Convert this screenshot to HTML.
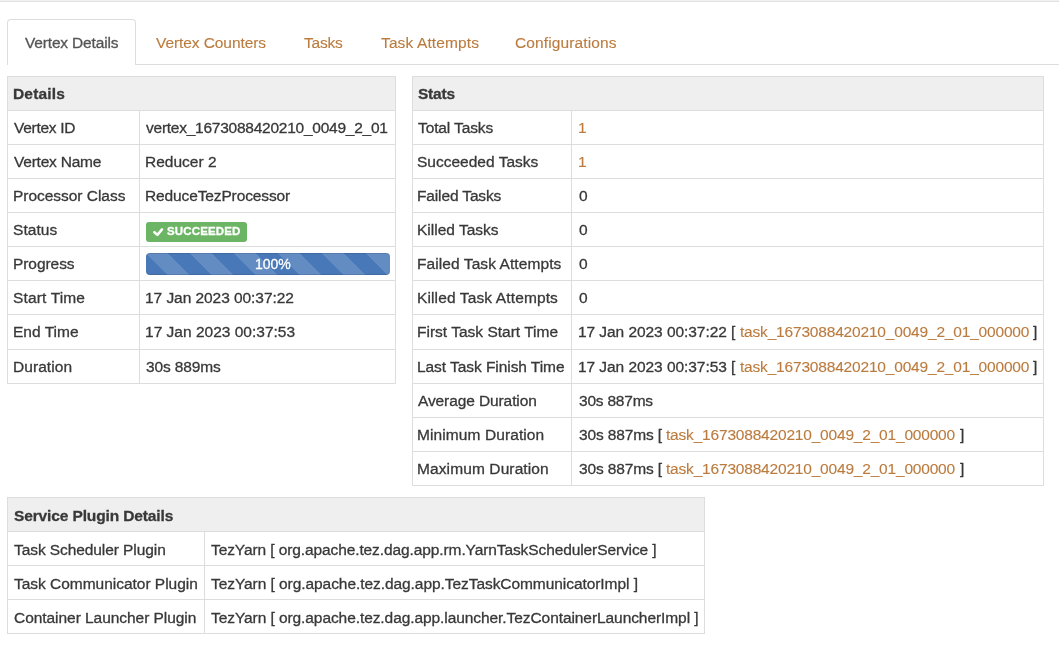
<!DOCTYPE html>
<html><head><meta charset="utf-8"><title>Vertex Details</title>
<style>
html,body{margin:0;padding:0;background:#fff;}
body{width:1059px;height:646px;overflow:hidden;position:relative;font-family:"Liberation Sans",sans-serif;}
.t{position:absolute;white-space:nowrap;line-height:20px;will-change:transform;-webkit-text-stroke:0.3px currentColor;}
.b{position:absolute;}
.a{color:#bb7b3e;-webkit-text-stroke:0.12px currentColor;}
.lk{-webkit-text-stroke:0.12px currentColor;}
</style></head><body>

<div class="b" style="left:0px;top:0px;width:1059px;height:1px;background:#f1f1f1"></div>
<div class="b" style="left:0px;top:1px;width:1059px;height:1px;background:#e2e2e2"></div>
<div class="b" style="left:7px;top:19px;width:129px;height:46px;box-sizing:border-box;border:1px solid #dddddd;border-bottom:none;border-radius:4px 4px 0 0;background:#fff"></div>
<div class="b" style="left:136px;top:64px;width:923px;height:1px;background:#dddddd"></div>
<div id="t0" class="t" style="left:24.72px;top:32.63px;font-size:15.5px;letter-spacing:-0.166px;color:#555555;">Vertex Details</div>
<div id="t1" class="t lk" style="left:156.48px;top:32.63px;font-size:15.5px;letter-spacing:-0.077px;color:#bb7b3e;">Vertex Counters</div>
<div id="t2" class="t lk" style="left:304.10px;top:32.63px;font-size:15.5px;letter-spacing:-0.225px;color:#bb7b3e;">Tasks</div>
<div id="t3" class="t lk" style="left:380.67px;top:32.63px;font-size:15.5px;letter-spacing:0.127px;color:#bb7b3e;">Task Attempts</div>
<div id="t4" class="t lk" style="left:514.82px;top:32.63px;font-size:15.5px;letter-spacing:0.118px;color:#bb7b3e;">Configurations</div>
<div class="b" style="left:7px;top:76px;width:389px;height:35px;background:#efefef"></div>
<div class="b" style="left:7px;top:76px;width:389px;height:1px;background:#dddddd"></div>
<div class="b" style="left:7px;top:383px;width:389px;height:1px;background:#dddddd"></div>
<div class="b" style="left:7px;top:76px;width:1px;height:308px;background:#dddddd"></div>
<div class="b" style="left:395px;top:76px;width:1px;height:308px;background:#dddddd"></div>
<div class="b" style="left:7px;top:110px;width:389px;height:1px;background:#dddddd"></div>
<div class="b" style="left:7px;top:144px;width:389px;height:1px;background:#dddddd"></div>
<div class="b" style="left:7px;top:178px;width:389px;height:1px;background:#dddddd"></div>
<div class="b" style="left:7px;top:212px;width:389px;height:1px;background:#dddddd"></div>
<div class="b" style="left:7px;top:246px;width:389px;height:1px;background:#dddddd"></div>
<div class="b" style="left:7px;top:280px;width:389px;height:1px;background:#dddddd"></div>
<div class="b" style="left:7px;top:314px;width:389px;height:1px;background:#dddddd"></div>
<div class="b" style="left:7px;top:349px;width:389px;height:1px;background:#dddddd"></div>
<div class="b" style="left:139px;top:110px;width:1px;height:274px;background:#dddddd"></div>
<div id="t5" class="t" style="left:12.82px;top:84.33px;font-size:15.5px;font-weight:bold;letter-spacing:0.165px;color:#383838;">Details</div>
<div id="t6" class="t" style="left:13.72px;top:118.33px;font-size:15.5px;letter-spacing:-0.281px;color:#383838;">Vertex ID</div>
<div id="t7" class="t" style="left:145.91px;top:118.33px;font-size:15.5px;letter-spacing:-0.245px;color:#383838;">vertex_1673088420210_0049_2_01</div>
<div id="t8" class="t" style="left:13.72px;top:152.33px;font-size:15.5px;letter-spacing:-0.225px;color:#383838;">Vertex Name</div>
<div id="t9" class="t" style="left:145.01px;top:152.33px;font-size:15.5px;letter-spacing:0.011px;color:#383838;">Reducer 2</div>
<div id="t10" class="t" style="left:12.82px;top:186.33px;font-size:15.5px;letter-spacing:-0.032px;color:#383838;">Processor Class</div>
<div id="t11" class="t" style="left:145.01px;top:186.33px;font-size:15.5px;letter-spacing:-0.127px;color:#383838;">ReduceTezProcessor</div>
<div id="t12" class="t" style="left:12.82px;top:220.33px;font-size:15.5px;letter-spacing:0.054px;color:#383838;">Status</div>
<div id="t13" class="t" style="left:12.82px;top:254.33px;font-size:15.5px;letter-spacing:-0.064px;color:#383838;">Progress</div>
<div id="t14" class="t" style="left:12.82px;top:288.33px;font-size:15.5px;letter-spacing:0.150px;color:#383838;">Start Time</div>
<div id="t15" class="t" style="left:145.01px;top:288.33px;font-size:15.5px;letter-spacing:-0.057px;color:#383838;">17 Jan 2023 00:37:22</div>
<div id="t16" class="t" style="left:12.82px;top:322.33px;font-size:15.5px;letter-spacing:0.013px;color:#383838;">End Time</div>
<div id="t17" class="t" style="left:145.01px;top:322.33px;font-size:15.5px;letter-spacing:0.005px;color:#383838;">17 Jan 2023 00:37:53</div>
<div id="t18" class="t" style="left:12.82px;top:357.33px;font-size:15.5px;letter-spacing:0.064px;color:#383838;">Duration</div>
<div id="t19" class="t" style="left:145.91px;top:357.33px;font-size:15.5px;letter-spacing:-0.135px;color:#383838;">30s 889ms</div>
<div class="b" style="left:146px;top:222px;width:101px;height:20px;background:#6cb564;border-radius:3px"></div>
<svg class="b" style="left:146px;top:222px" width="101" height="20" viewBox="0 0 101 20"><path d="M8.4 10.2 L11.4 12.9 L16.0 7.4" fill="none" stroke="#fff" stroke-width="2.5" stroke-linecap="round" stroke-linejoin="round"/></svg>
<div class="t" style="left:166.5px;top:220.72px;font-size:11.5px;font-weight:bold;letter-spacing:0.15px;color:#fff">SUCCEEDED</div>
<div class="b" style="left:146px;top:253px;width:244px;height:22px;border-radius:4px;overflow:hidden;background-color:#4878b7;background-image:linear-gradient(45deg,rgba(255,255,255,.15) 25%,transparent 25%,transparent 50%,rgba(255,255,255,.15) 50%,rgba(255,255,255,.15) 75%,transparent 75%,transparent);background-size:44px 44px;box-shadow:inset 0 1px 0 rgba(0,0,0,.12),inset 0 -1px 0 rgba(0,0,0,.12)"></div>
<div class="t" style="left:255.3px;top:253.85px;font-size:14px;color:#fff">100%</div>
<div class="b" style="left:412px;top:76px;width:632px;height:35px;background:#efefef"></div>
<div class="b" style="left:412px;top:76px;width:632px;height:1px;background:#dddddd"></div>
<div class="b" style="left:412px;top:485px;width:632px;height:1px;background:#dddddd"></div>
<div class="b" style="left:412px;top:76px;width:1px;height:410px;background:#dddddd"></div>
<div class="b" style="left:1043px;top:76px;width:1px;height:410px;background:#dddddd"></div>
<div class="b" style="left:412px;top:110px;width:632px;height:1px;background:#dddddd"></div>
<div class="b" style="left:412px;top:144px;width:632px;height:1px;background:#dddddd"></div>
<div class="b" style="left:412px;top:178px;width:632px;height:1px;background:#dddddd"></div>
<div class="b" style="left:412px;top:212px;width:632px;height:1px;background:#dddddd"></div>
<div class="b" style="left:412px;top:246px;width:632px;height:1px;background:#dddddd"></div>
<div class="b" style="left:412px;top:280px;width:632px;height:1px;background:#dddddd"></div>
<div class="b" style="left:412px;top:314px;width:632px;height:1px;background:#dddddd"></div>
<div class="b" style="left:412px;top:349px;width:632px;height:1px;background:#dddddd"></div>
<div class="b" style="left:412px;top:383px;width:632px;height:1px;background:#dddddd"></div>
<div class="b" style="left:412px;top:417px;width:632px;height:1px;background:#dddddd"></div>
<div class="b" style="left:412px;top:451px;width:632px;height:1px;background:#dddddd"></div>
<div class="b" style="left:571px;top:110px;width:1px;height:376px;background:#dddddd"></div>
<div id="t20" class="t" style="left:418.34px;top:84.33px;font-size:15.5px;font-weight:bold;letter-spacing:-0.225px;color:#383838;">Stats</div>
<div id="t21" class="t" style="left:418.34px;top:118.33px;font-size:15.5px;letter-spacing:-0.117px;color:#383838;">Total Tasks</div>
<div id="t22" class="t" style="left:577.63px;top:118.33px;font-size:15.5px;color:#383838;"><span class="a">1</span></div>
<div id="t23" class="t" style="left:417.44px;top:152.33px;font-size:15.5px;letter-spacing:0.006px;color:#383838;">Succeeded Tasks</div>
<div id="t24" class="t" style="left:577.63px;top:152.33px;font-size:15.5px;color:#383838;"><span class="a">1</span></div>
<div id="t25" class="t" style="left:417.44px;top:186.33px;font-size:15.5px;letter-spacing:-0.139px;color:#383838;">Failed Tasks</div>
<div id="t26" class="t" style="left:578.53px;top:186.33px;font-size:15.5px;color:#383838;">0</div>
<div id="t27" class="t" style="left:417.44px;top:220.33px;font-size:15.5px;color:#383838;">Killed Tasks</div>
<div id="t28" class="t" style="left:578.53px;top:220.33px;font-size:15.5px;color:#383838;">0</div>
<div id="t29" class="t" style="left:417.44px;top:254.33px;font-size:15.5px;letter-spacing:0.081px;color:#383838;">Failed Task Attempts</div>
<div id="t30" class="t" style="left:578.53px;top:254.33px;font-size:15.5px;color:#383838;">0</div>
<div id="t31" class="t" style="left:417.44px;top:288.33px;font-size:15.5px;letter-spacing:0.128px;color:#383838;">Killed Task Attempts</div>
<div id="t32" class="t" style="left:578.53px;top:288.33px;font-size:15.5px;color:#383838;">0</div>
<div id="t33" class="t" style="left:417.44px;top:322.33px;font-size:15.5px;letter-spacing:0.005px;color:#383838;">First Task Start Time</div>
<div id="t34" class="t" style="left:577.63px;top:322.33px;font-size:15.5px;letter-spacing:-0.060px;color:#383838;">17 Jan 2023 00:37:22 [</div>
<div id="t35" class="t lk" style="left:739.67px;top:322.33px;font-size:15.5px;letter-spacing:-0.185px;color:#bb7b3e;">task_1673088420210_0049_2_01_000000</div>
<div id="t36" class="t" style="left:1033.34px;top:322.33px;font-size:15.5px;color:#383838;">]</div>
<div id="t37" class="t" style="left:417.44px;top:357.33px;font-size:15.5px;letter-spacing:-0.059px;color:#383838;">Last Task Finish Time</div>
<div id="t38" class="t" style="left:577.63px;top:357.33px;font-size:15.5px;letter-spacing:-0.060px;color:#383838;">17 Jan 2023 00:37:53 [</div>
<div id="t39" class="t lk" style="left:739.67px;top:357.33px;font-size:15.5px;letter-spacing:-0.185px;color:#bb7b3e;">task_1673088420210_0049_2_01_000000</div>
<div id="t40" class="t" style="left:1033.34px;top:357.33px;font-size:15.5px;color:#383838;">]</div>
<div id="t41" class="t" style="left:418.34px;top:391.33px;font-size:15.5px;letter-spacing:-0.102px;color:#383838;">Average Duration</div>
<div id="t42" class="t" style="left:578.53px;top:391.33px;font-size:15.5px;letter-spacing:-0.214px;color:#383838;">30s 887ms</div>
<div id="t43" class="t" style="left:417.44px;top:425.33px;font-size:15.5px;letter-spacing:0.096px;color:#383838;">Minimum Duration</div>
<div id="t44" class="t" style="left:578.53px;top:425.33px;font-size:15.5px;letter-spacing:-0.144px;color:#383838;">30s 887ms [</div>
<div id="t45" class="t lk" style="left:666.15px;top:425.33px;font-size:15.5px;letter-spacing:-0.191px;color:#bb7b3e;">task_1673088420210_0049_2_01_000000</div>
<div id="t46" class="t" style="left:960.10px;top:425.33px;font-size:15.5px;color:#383838;">]</div>
<div id="t47" class="t" style="left:417.44px;top:459.33px;font-size:15.5px;letter-spacing:0.108px;color:#383838;">Maximum Duration</div>
<div id="t48" class="t" style="left:578.53px;top:459.33px;font-size:15.5px;letter-spacing:-0.144px;color:#383838;">30s 887ms [</div>
<div id="t49" class="t lk" style="left:666.15px;top:459.33px;font-size:15.5px;letter-spacing:-0.191px;color:#bb7b3e;">task_1673088420210_0049_2_01_000000</div>
<div id="t50" class="t" style="left:960.10px;top:459.33px;font-size:15.5px;color:#383838;">]</div>
<div class="b" style="left:7px;top:497px;width:698px;height:35px;background:#efefef"></div>
<div class="b" style="left:7px;top:497px;width:698px;height:1px;background:#dddddd"></div>
<div class="b" style="left:7px;top:633px;width:698px;height:1px;background:#dddddd"></div>
<div class="b" style="left:7px;top:497px;width:1px;height:137px;background:#dddddd"></div>
<div class="b" style="left:704px;top:497px;width:1px;height:137px;background:#dddddd"></div>
<div class="b" style="left:7px;top:531px;width:698px;height:1px;background:#dddddd"></div>
<div class="b" style="left:7px;top:565px;width:698px;height:1px;background:#dddddd"></div>
<div class="b" style="left:7px;top:599px;width:698px;height:1px;background:#dddddd"></div>
<div class="b" style="left:204px;top:531px;width:1px;height:103px;background:#dddddd"></div>
<div id="t51" class="t" style="left:13.53px;top:506.23px;font-size:15.5px;font-weight:bold;letter-spacing:-0.129px;color:#383838;">Service Plugin Details</div>
<div id="t52" class="t" style="left:13.53px;top:540.23px;font-size:15.5px;letter-spacing:-0.081px;color:#383838;">Task Scheduler Plugin</div>
<div id="t53" class="t" style="left:211.10px;top:540.23px;font-size:15.5px;letter-spacing:-0.100px;color:#383838;">TezYarn [ org.apache.tez.dag.app.rm.YarnTaskSchedulerService ]</div>
<div id="t54" class="t" style="left:13.53px;top:574.23px;font-size:15.5px;letter-spacing:-0.023px;color:#383838;">Task Communicator Plugin</div>
<div id="t55" class="t" style="left:211.10px;top:574.23px;font-size:15.5px;letter-spacing:-0.062px;color:#383838;">TezYarn [ org.apache.tez.dag.app.TezTaskCommunicatorImpl ]</div>
<div id="t56" class="t" style="left:13.53px;top:608.23px;font-size:15.5px;letter-spacing:-0.049px;color:#383838;">Container Launcher Plugin</div>
<div id="t57" class="t" style="left:211.10px;top:608.23px;font-size:15.5px;letter-spacing:-0.075px;color:#383838;">TezYarn [ org.apache.tez.dag.app.launcher.TezContainerLauncherImpl ]</div>
</body></html>
